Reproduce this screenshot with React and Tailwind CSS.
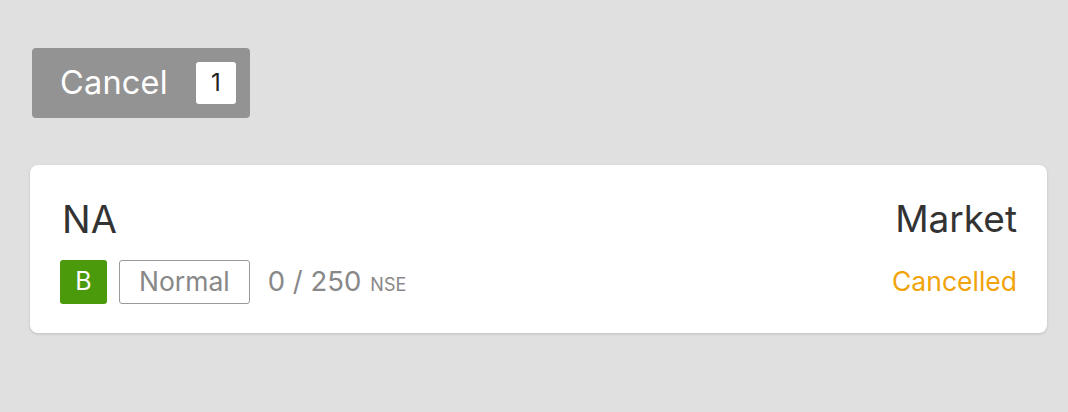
import React from 'react'

const App = () => {
  return (
    <div className="w-[1068px] h-[412px] bg-[#e0e0e0] pt-[48px] px-[30px] font-['Inter',sans-serif]">
      {/* Cancel button */}
      <div className="ml-[2px] inline-flex items-center h-[70px] w-[218px] bg-[#939393] rounded-[4px] pl-[28px] gap-[28px]">
        <span className="text-white text-[32.5px] leading-none tracking-[0.2px]">Cancel</span>
        <span className="w-[40px] h-[42px] bg-white rounded-[3px] flex items-center justify-center text-[#222] text-[24px]">1</span>
      </div>

      {/* Order card */}
      <div className="mt-[47px] w-[1017px] h-[168px] bg-white rounded-[8px] shadow-[0_1px_3px_rgba(0,0,0,0.15)] px-[30px] pt-[30px]">
        <div className="flex justify-between items-start">
          <div className="text-[38px] leading-[48px] text-[#333] pl-[2px]">NA</div>
          <div className="text-[37px] leading-[48px] text-[#333]">Market</div>
        </div>
        <div className="flex justify-between items-center mt-[17px]">
          <div className="flex items-center">
            <span className="w-[47px] h-[44px] bg-[#4b9a0b] rounded-[3px] flex items-center justify-center text-white text-[25px]">B</span>
            <span className="ml-[12px] h-[44px] px-[19px] border-[1.5px] border-[#9a9a9a] rounded-[3px] flex items-center text-[#888] text-[26.5px]">Normal</span>
            <span className="ml-[18px] text-[#888] text-[27.5px]">0 / 250</span>
            <span className="ml-[9px] text-[#888] text-[18px] mt-[4px]">NSE</span>
          </div>
          <span className="text-[#f0a30a] text-[26.5px]">Cancelled</span>
        </div>
      </div>
    </div>
  )
}

export default App
